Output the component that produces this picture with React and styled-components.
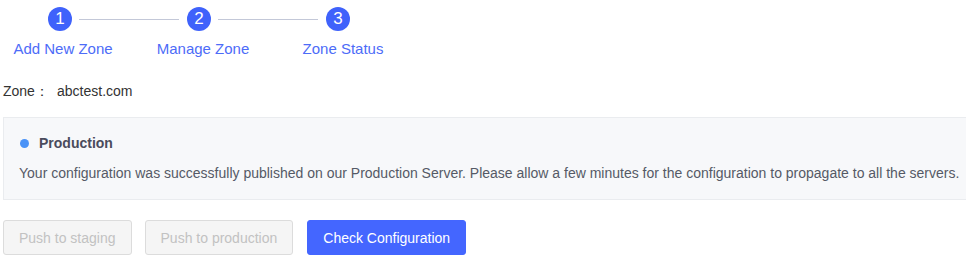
import React from "react";
import styled, { createGlobalStyle } from "styled-components";

const Global = createGlobalStyle`
  html, body { margin: 0; padding: 0; background: #fff; overflow: hidden; }
  body { font-family: "Liberation Sans", Arial, sans-serif; }
`;

const Page = styled.div`
  padding: 7px 0 0 3px;
  width: 1000px;
`;

const StepHeads = styled.div`
  display: flex;
  align-items: center;
  padding-left: 45px;
  height: 24px;
`;

const Circle = styled.div`
  width: 24px;
  height: 24px;
  border-radius: 50%;
  background: #3f62fb;
  color: #fff;
  font-size: 17px;
  line-height: 24px;
  text-align: center;
  flex: none;
`;

const Connector = styled.div`
  width: 100px;
  height: 1px;
  background: #c3c8d8;
  margin: 0 8px 0 7px;
`;

const StepLabels = styled.div`
  display: grid;
  grid-template-columns: repeat(3, 140px);
  justify-items: center;
  margin: 8px 0 0 -10px;
`;

const StepLabel = styled.div`
  font-size: 15px;
  line-height: 20px;
  color: #4d6cf8;
`;

const ZoneLine = styled.div`
  margin-top: 22px;
  font-size: 14px;
  line-height: 20px;
  color: #333;
  display: flex;
`;

const ZoneKey = styled.span`
  width: 54px;
`;

const Panel = styled.div`
  margin-top: 16px;
  background: #f7f8fa;
  border: 1px solid #eaecef;
  padding: 15px 0 16px 15px;
`;

const PanelTitle = styled.div`
  display: flex;
  align-items: center;
  gap: 10px;
  font-size: 14px;
  line-height: 20px;
  font-weight: 700;
  color: #4a4b5c;
`;

const Dot = styled.span`
  width: 9px;
  height: 9px;
  border-radius: 50%;
  background: #4a93f7;
  margin-left: 1px;
`;

const PanelText = styled.div`
  margin-top: 10px;
  font-size: 14px;
  line-height: 20px;
  color: #555a66;
  white-space: nowrap;
`;

const Actions = styled.div`
  display: flex;
  gap: 13px;
  margin-top: 20px;
`;

const Button = styled.button`
  height: 35px;
  padding: 0 15px;
  border-radius: 3px;
  font-family: "Liberation Sans", Arial, sans-serif;
  font-size: 14px;
  border: 1px solid ${(p) => (p.$primary ? "#4466ff" : "#dcdcdc")};
  background: ${(p) => (p.$primary ? "#4466ff" : "#f5f5f5")};
  color: ${(p) => (p.$primary ? "#fff" : "#c2c2c2")};
  cursor: ${(p) => (p.disabled ? "not-allowed" : "pointer")};
  margin-left: ${(p) => p.$ml || 0}px;
`;

export default function App() {
  return (
    <>
      <Global />
      <Page>
        <StepHeads>
          <Circle>1</Circle>
          <Connector />
          <Circle>2</Circle>
          <Connector />
          <Circle>3</Circle>
        </StepHeads>
        <StepLabels>
          <StepLabel>Add New Zone</StepLabel>
          <StepLabel>Manage Zone</StepLabel>
          <StepLabel>Zone Status</StepLabel>
        </StepLabels>
        <ZoneLine>
          <ZoneKey>Zone：</ZoneKey>
          <span>abctest.com</span>
        </ZoneLine>
        <Panel>
          <PanelTitle>
            <Dot />
            Production
          </PanelTitle>
          <PanelText>
            Your configuration was successfully published on our Production Server. Please allow a few minutes for the configuration to propagate to all the servers.
          </PanelText>
        </Panel>
        <Actions>
          <Button disabled>Push to staging</Button>
          <Button disabled>Push to production</Button>
          <Button $primary $ml={1}>Check Configuration</Button>
        </Actions>
      </Page>
    </>
  );
}
